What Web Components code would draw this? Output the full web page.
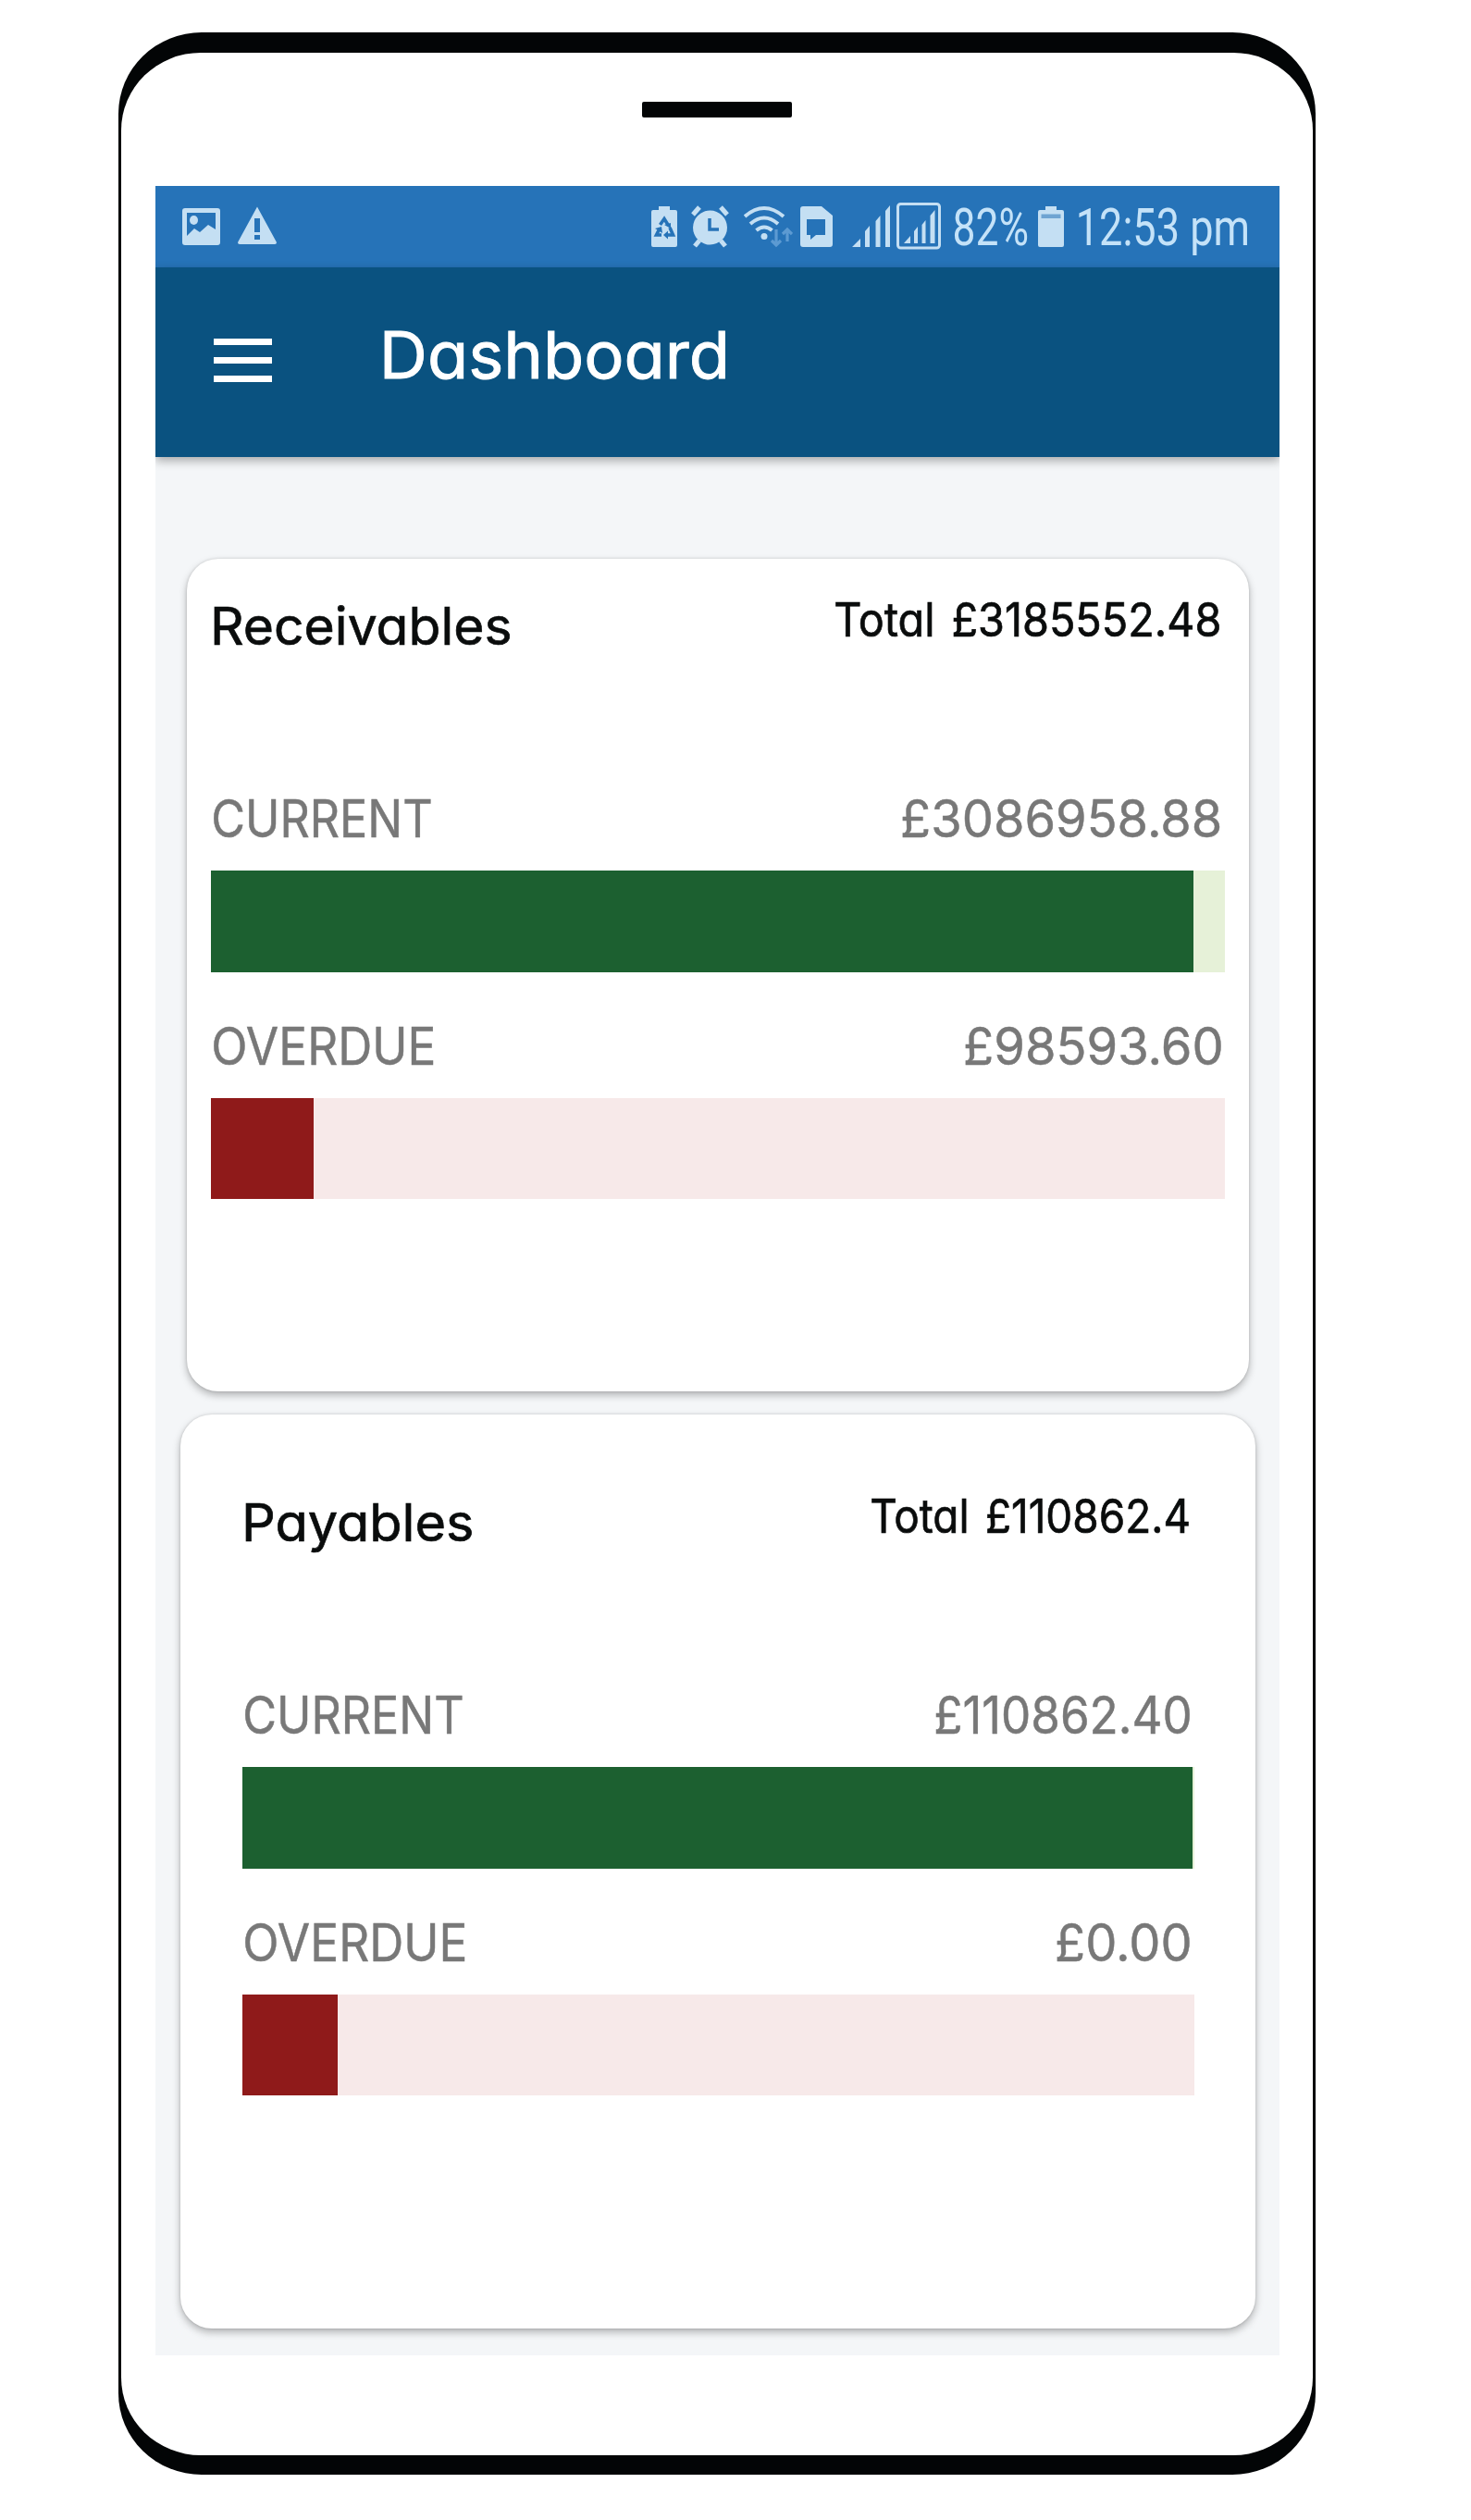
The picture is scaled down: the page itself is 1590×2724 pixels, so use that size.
<!DOCTYPE html>
<html lang="en">
<head>
<meta charset="UTF-8">
<title>Dashboard</title>
<style>
    body {
        margin: 0;
        background: #fff;
        font-family: Inter, "Open Sans", sans-serif;
    }
</style>
</head>
<body>
<phone-frame>
    <status-bar></status-bar>
    <app-header>Dashboard</app-header>
    <main-view>
        <summary-card heading="Receivables" heading-width="320" total="Total £3185552.48" total-width="415"
            style="--card-margin: 0 33.5px 0 33.5px; --card-height: 900.5px; --card-padding: 41.5px 25.5px 0 26.7px;">
            <amount-meter label="CURRENT" label-width="235" amount="£3086958.88" amount-width="343" value="96.9" kind="current"></amount-meter>
            <amount-meter label="OVERDUE" label-width="237" amount="£98593.60" amount-width="275" value="10.05" kind="overdue"></amount-meter>
        </summary-card>
        <summary-card heading="Payables" heading-width="245" total="Total £110862.4" total-width="343"
            style="--card-margin: 24.5px 26.5px 0 27px; --card-height: 988.5px; --card-padding: 85.5px 66px 0 67.3px;">
            <amount-meter label="CURRENT" label-width="235" amount="£110862.40" amount-width="273.5" value="99.8" kind="current"></amount-meter>
            <amount-meter label="OVERDUE" label-width="237" amount="£0.00" amount-width="142" value="10" kind="overdue"></amount-meter>
        </summary-card>
    </main-view>
</phone-frame>

<script>
// Single line of text squeezed to a given ink width
class FitText extends HTMLElement {
    connectedCallback() {
        this.attachShadow({ mode: 'open' });
        this.shadowRoot.innerHTML = `
            <style>
                :host {
                    display: block;
                    flex: none;
                    line-height: 1;
                    white-space: nowrap;
                    font-feature-settings: "cv11";
                }
                span {
                    display: inline-block;
                    transform-origin: 0 0;
                }
            </style>
            <span></span>
        `;
        const target = parseFloat(this.getAttribute('width'));
        const span = this.shadowRoot.querySelector('span');
        span.textContent = this.getAttribute('text');
        this.style.width = target + 'px';

        const style = getComputedStyle(span);
        const ctx = document.createElement('canvas').getContext('2d');
        ctx.font = `${style.fontWeight} ${style.fontSize} ${style.fontFamily}`;
        const m = ctx.measureText(span.textContent);
        const left = -m.actualBoundingBoxLeft;
        const right = m.width - m.actualBoundingBoxRight;
        const scale = target / (span.offsetWidth - left - right);
        span.style.transform = `translateX(${-left * scale}px) scaleX(${scale})`;
    }
}

class PhoneFrame extends HTMLElement {
    connectedCallback() {
        this.attachShadow({ mode: 'open' });
        this.shadowRoot.innerHTML = `
            <style>
                :host {
                    display: block;
                    box-sizing: border-box;
                    width: 1294.4px;
                    height: 2639.7px;
                    margin: 35px 0 0 128px;
                    padding: 21.6px 3px 20.4px;
                    background: #030506;
                    border-radius: 90px / 88px;
                }
                .body {
                    display: flex;
                    flex-direction: column;
                    align-items: center;
                    box-sizing: border-box;
                    height: 100%;
                    padding-top: 53.2px;
                    background: #fff;
                    border-radius: 86px / 84px;
                }
                .speaker {
                    flex: none;
                    width: 162px;
                    height: 17px;
                    border-radius: 2px;
                    background: #030506;
                }
                .screen {
                    display: flex;
                    flex-direction: column;
                    width: 1215px;
                    height: 2345.5px;
                    margin: 74px 0 0 1px;
                    background: #f4f6f8;
                    overflow: hidden;
                }
            </style>
            <div class="body">
                <div class="speaker"></div>
                <div class="screen"><slot></slot></div>
            </div>
        `;
    }
}

// All icons are 52px tall and share the same baseline
const ICONS = {
    image: [41, `
        <path fill-rule="evenodd" d="M3 7h35q3 0 3 3v34q0 3-3 3H3q-3 0-3-3V10q0-3 3-3zM5 12v25l8-8 6 4 9-8 8 5V12z"/>
        <ellipse cx="12.500" cy="20" rx="4.500" ry="5"/>`],
    warning: [42, `
        <path fill-rule="evenodd" d="M21 5.500 42 44q0 2-2 2H2q-2 0-2-2zM18 18v15h6V18zM18 36v5h6v-5z"/>`],
    recycle: [28, `
        <path d="M8 5h12v4h6q2 0 2 2v36q0 2-2 2H2q-2 0-2-2V11q0-2 2-2h6z"/>
        <g fill="none" stroke="#2673b8" stroke-width="3.600">
            <path d="M9.500 25 14 18.500 18 25M20 28l3.500 8h-6M11 36H5.500L9 29"/>
        </g>
        <path fill="#2673b8" d="m14 25 7-2v6zM18 31.500v9L13 36zM4 29l7-2 1 7z"/>`],
    alarm: [41, `
        <circle cx="20.500" cy="28" r="18.500"/>
        <path fill="none" stroke="#c4dff3" stroke-width="5" d="m2 14 7-8M39 14l-7-8M9 42l-5 6M32 42l5 6"/>
        <path fill="none" stroke="#2673b8" stroke-width="3.500" d="M20 18v12h10"/>`],
    wifi: [53, `
        <g fill="none" stroke="#c4dff3" stroke-width="4">
            <path d="M1 16q21-18 42 0M7 24q15-13 30 0M13.500 31q8.500-7 17 0"/>
        </g>
        <circle cx="22" cy="37.500" r="3.500"/>
        <path fill="none" stroke="#5c9ad2" stroke-width="3.200" d="M35 30v17M30 42l5 5 5-5M47 43V30M42 35l5-5 5 5"/>`],
    sim: [35, `
        <path fill-rule="evenodd" d="M3 5h20l12 10v31q0 3-3 3H3q-3 0-3-3V8q0-3 3-3zM7 19v17h4v5l6-5h10V19z"/>`],
    signal: [42, `
        <path d="M0 49 9 40v9zM14 32l5-6v23h-5zM25.500 21l5-6v34h-5zM36 10l5-6v45h-5z"/>`],
    boxed: [48, `
        <rect x="1.500" y="2.500" width="45" height="47.500" rx="3" fill="none" stroke="#c4dff3" stroke-width="3"/>
        <path d="m8 45 7-8v8zM19 32l4-5v18h-4zM27.500 25l4-5v25h-4zM36.500 15l5-6v36h-5z"/>`],
    battery: [28, `
        <path d="M8 5h12v4h6q2 0 2 2v36q0 2-2 2H2q-2 0-2-2V11q0-2 2-2h6z"/>
        <path fill="#6fa4d2" d="M3.500 13.500h21V18h-21z"/>`]
};

class StatusIcon extends HTMLElement {
    connectedCallback() {
        const [width, shapes] = ICONS[this.getAttribute('name')];
        this.attachShadow({ mode: 'open' });
        this.shadowRoot.innerHTML = `
            <style>
                :host { display: block; flex: none; }
                svg { display: block; fill: #c4dff3; }
            </style>
            <svg width="${width}" height="52" viewBox="0 0 ${width} 52">${shapes}</svg>
        `;
    }
}

class StatusBar extends HTMLElement {
    connectedCallback() {
        this.attachShadow({ mode: 'open' });
        this.shadowRoot.innerHTML = `
            <style>
                :host {
                    display: flex;
                    flex: none;
                    justify-content: space-between;
                    box-sizing: border-box;
                    height: 88px;
                    padding: 17.5px 34.5px 0 28.5px;
                    background: #2673b8;
                    color: #c4e2f8;
                    font-family: Roboto, sans-serif;
                    font-size: 56px;
                }
                .group { display: flex; align-items: flex-start; }
                .left { gap: 19px; }
                .sim { margin-left: 8px; }
                .alarm { margin-left: 15px; }
                .wifi { margin-left: 16px; }
                .signal { margin-left: 21px; }
                .boxed { margin-left: 6px; }
                .percent { margin-left: 14.5px; }
                .battery { margin-left: 11.5px; }
                .time { margin-left: 16.5px; }
            </style>
            <div class="group left">
                <status-icon name="image"></status-icon>
                <status-icon name="warning"></status-icon>
            </div>
            <div class="group">
                <status-icon name="recycle"></status-icon>
                <status-icon class="alarm" name="alarm"></status-icon>
                <status-icon class="wifi" name="wifi"></status-icon>
                <status-icon class="sim" name="sim"></status-icon>
                <status-icon class="signal" name="signal"></status-icon>
                <status-icon class="boxed" name="boxed"></status-icon>
                <fit-text class="percent" text="82%" width="78.5"></fit-text>
                <status-icon class="battery" name="battery"></status-icon>
                <fit-text class="time" text="12:53 pm" width="182.5"></fit-text>
            </div>
        `;
    }
}

class AppHeader extends HTMLElement {
    connectedCallback() {
        this.attachShadow({ mode: 'open' });
        this.shadowRoot.innerHTML = `
            <style>
                :host {
                    display: flex;
                    flex: none;
                    align-items: flex-start;
                    box-sizing: border-box;
                    height: 205px;
                    padding: 60px 0 0 62.5px;
                    background: #0a5280;
                    color: #fff;
                    font-size: 70.5px;
                    -webkit-text-stroke: 0.9px;
                    box-shadow: 0 4px 10px rgba(0, 0, 0, 0.32);
                    z-index: 1;
                }
                .menu {
                    display: flex;
                    flex-direction: column;
                    gap: 12.5px;
                    width: 63px;
                    margin: 17px 122.5px 0 0;
                }
                .menu i { height: 7.5px; background: #fff; }
            </style>
            <div class="menu"><i></i><i></i><i></i></div>
            <fit-text text="${this.textContent}" width="367.5"></fit-text>
        `;
    }
}

class MainView extends HTMLElement {
    connectedCallback() {
        this.attachShadow({ mode: 'open' });
        this.shadowRoot.innerHTML = `
            <style>
                :host {
                    display: flex;
                    flex-direction: column;
                    padding-top: 110px;
                }
            </style>
            <slot></slot>
        `;
    }
}

class SummaryCard extends HTMLElement {
    connectedCallback() {
        this.attachShadow({ mode: 'open' });
        this.shadowRoot.innerHTML = `
            <style>
                :host {
                    display: block;
                    box-sizing: border-box;
                    height: var(--card-height);
                    margin: var(--card-margin);
                    padding: var(--card-padding);
                    background: #fff;
                    border-radius: 34px;
                    box-shadow: 0 4px 9px rgba(0, 0, 0, 0.28), 0 0 3px rgba(0, 0, 0, 0.14);
                }
                .head {
                    display: flex;
                    justify-content: space-between;
                    align-items: flex-start;
                    height: 212px;
                    padding: 0 6px 0 3px;
                    box-sizing: border-box;
                    color: #0a0c0c;
                    -webkit-text-stroke: 0.7px;
                }
                .title { margin-top: 4px; font-size: 56.5px; }
                .total { font-size: 50.5px; word-spacing: 5px; }
                .meters {
                    display: flex;
                    flex-direction: column;
                    gap: 52px;
                }
            </style>
            <div class="head">
                <fit-text class="title" text="${this.getAttribute('heading')}" width="${this.getAttribute('heading-width')}"></fit-text>
                <fit-text class="total" text="${this.getAttribute('total')}" width="${this.getAttribute('total-width')}"></fit-text>
            </div>
            <div class="meters"><slot></slot></div>
        `;
    }
}

class AmountMeter extends HTMLElement {
    connectedCallback() {
        const current = this.getAttribute('kind') === 'current';
        this.attachShadow({ mode: 'open' });
        this.shadowRoot.innerHTML = `
            <style>
                :host { display: block; }
                .row {
                    display: flex;
                    justify-content: space-between;
                    height: 84px;
                    padding: 0 5.5px 0 2.5px;
                    color: #787878;
                    font-size: 56px;
                    -webkit-text-stroke: 0.5px;
                }
                .track {
                    height: 109.5px;
                    background: ${current ? '#e6f1d8' : '#f7e9e9'};
                }
                .fill {
                    width: ${this.getAttribute('value')}%;
                    height: 100%;
                    background: ${current ? '#1c6030' : '#8f1a1a'};
                }
            </style>
            <div class="row">
                <fit-text text="${this.getAttribute('label')}" width="${this.getAttribute('label-width')}"></fit-text>
                <fit-text text="${this.getAttribute('amount')}" width="${this.getAttribute('amount-width')}"></fit-text>
            </div>
            <div class="track"><div class="fill"></div></div>
        `;
    }
}

customElements.define('fit-text', FitText);
customElements.define('status-icon', StatusIcon);
customElements.define('phone-frame', PhoneFrame);
customElements.define('status-bar', StatusBar);
customElements.define('app-header', AppHeader);
customElements.define('main-view', MainView);
customElements.define('summary-card', SummaryCard);
customElements.define('amount-meter', AmountMeter);
</script>
</body>
</html>
